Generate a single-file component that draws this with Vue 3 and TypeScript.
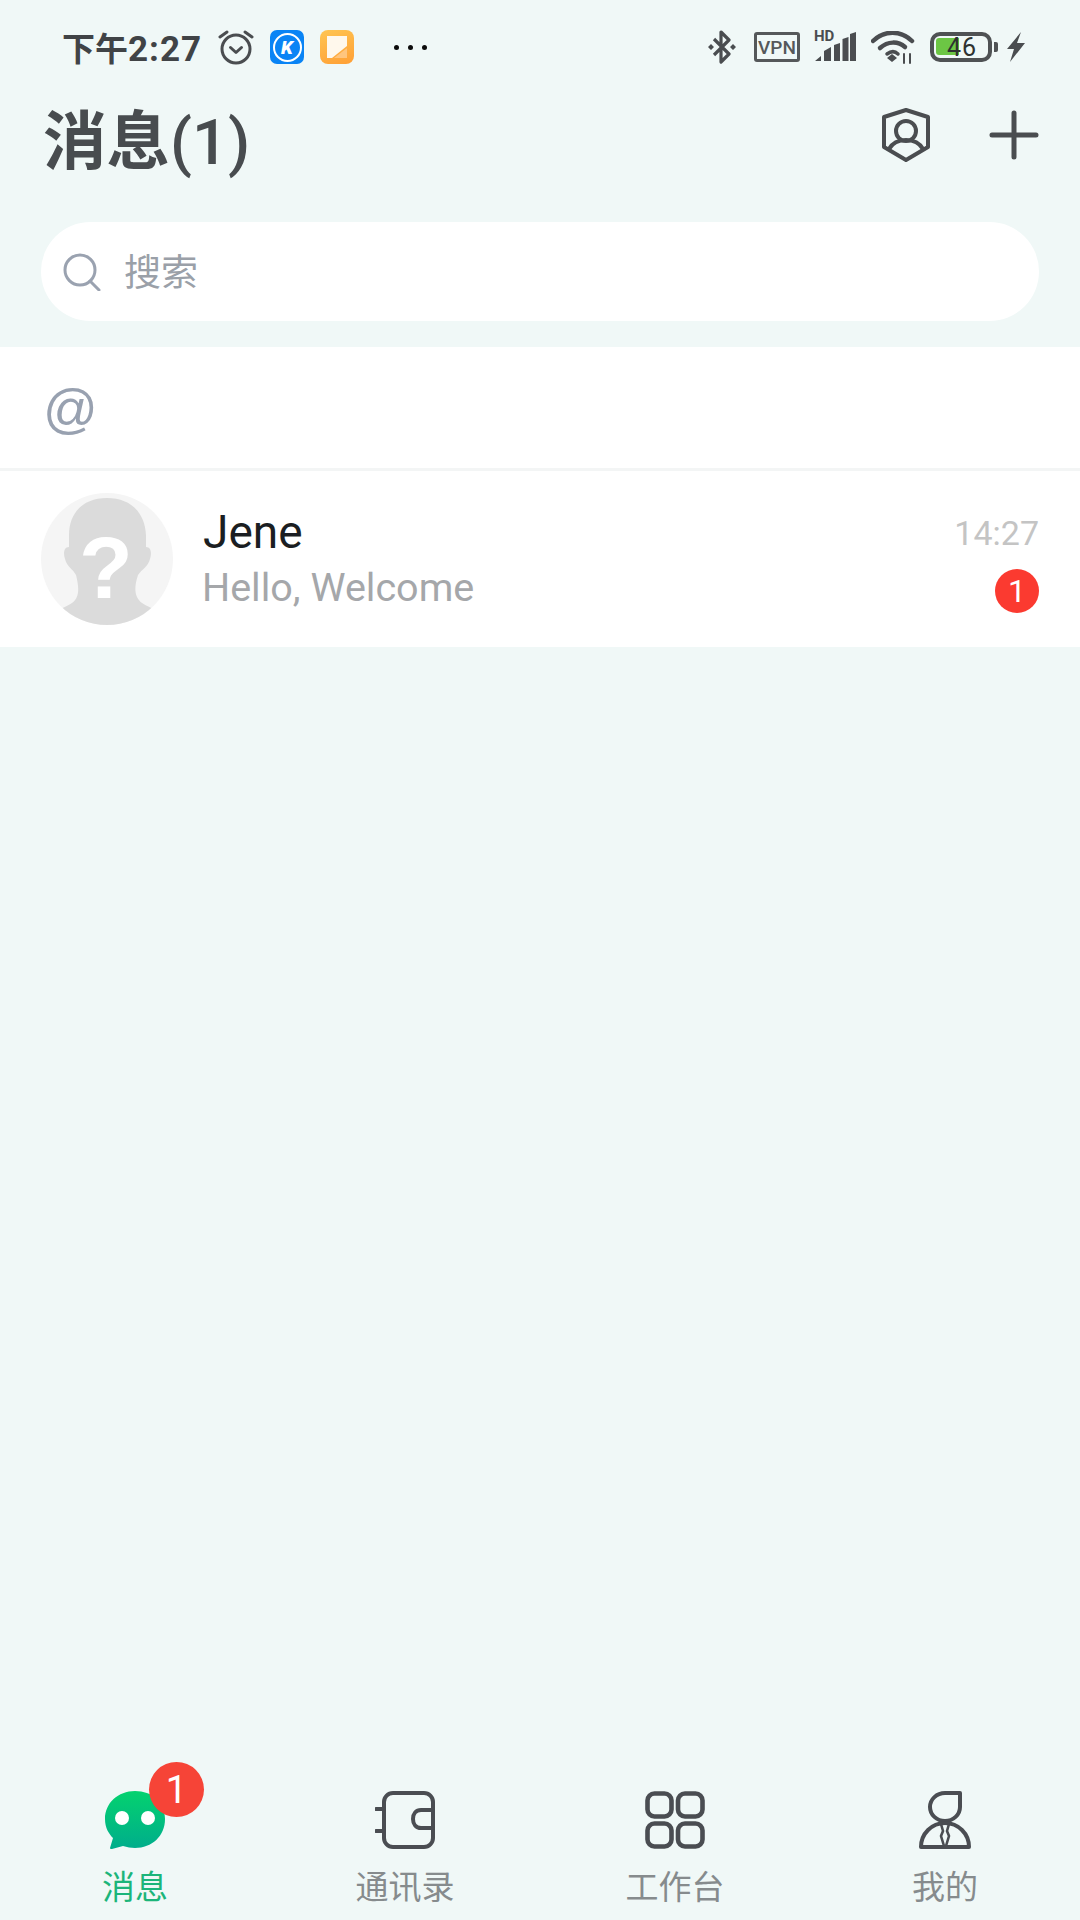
<script setup lang="ts">
type TabIcon = 'chat' | 'book' | 'grid' | 'me'

const tabs: { label: string; icon: TabIcon; active?: boolean }[] = [
  { label: '消息', icon: 'chat', active: true },
  { label: '通讯录', icon: 'book' },
  { label: '工作台', icon: 'grid' },
  { label: '我的', icon: 'me' },
]
</script>

<template>
  <div class="page">
    <div class="status">
      <div class="status-left">
        <span class="clock"><span class="clock-cjk">下午</span>2:27</span>
        <svg class="alarm" width="36" height="36" viewBox="0 0 36 36" fill="none" stroke="#4a4d50" stroke-width="3" stroke-linecap="round" stroke-linejoin="round">
          <circle cx="18" cy="20" r="14" />
          <path d="M12.5 18.5l5.5 5 5.500-5" />
          <path d="M2 8l7-5M34 8l-7-5" />
        </svg>
        <div class="app-k"><span class="app-k-ring">K</span></div>
        <div class="app-note">
          <svg width="22" height="24" viewBox="0 0 22 24">
            <path d="M1 1h20v10L6 23H1z" fill="#fff8ec" />
            <path d="M21 1v12L8 23h13z" fill="#ffc57e" />
          </svg>
        </div>
        <div class="more"><i /><i /><i /></div>
      </div>

      <div class="status-right">
        <svg class="bt" width="30" height="34" viewBox="0 0 30 34" fill="none" stroke="#4a4d50" stroke-width="3.2" stroke-linejoin="round">
          <path d="M7 9l15 15-8 8V2l8 8L7 25" />
          <path d="M1 17l3-3 3 3-3 3zM23 17l3-3 3 3-3 3z" fill="#4a4d50" stroke="none" />
        </svg>
        <span class="vpn">VPN</span>
        <div class="signal">
          <span class="hd">HD</span>
          <svg width="42" height="30" viewBox="0 0 42 30" fill="#4a4d50">
            <path d="M1 29l6-5v5zM10 29V19l7-4v14zM20 29V13l6-2v18zM28.500 29V7l6-2v24zM36 29V2l6-2v29z" />
          </svg>
        </div>
        <svg class="wifi" width="44" height="33" viewBox="0 0 44 33" fill="none" stroke="#4a4d50" stroke-width="4.500" stroke-linecap="round">
          <path d="M2 10C13 -1 30 -1 41 10" />
          <path d="M9 17C17 10 27 10 34 16" />
          <path d="M16 23c4-3 8-3 11 0" stroke-width="3.5" />
          <path d="M16 27l5-4 5 4-5 4z" fill="#4a4d50" stroke="none" />
          <path d="M33 23v9M39 23v9" stroke-width="2" />
        </svg>
        <div class="battery">
          <div class="battery-body">
            <div class="battery-fill" />
            <span class="battery-text">46</span>
          </div>
          <div class="battery-nub" />
        </div>
        <svg class="bolt" width="20" height="30" viewBox="0 0 20 30" fill="#4a4d50">
          <path d="M15 0L1 17h7L4 30l15-19h-8z" />
        </svg>
      </div>
    </div>

    <header class="top">
      <h1 class="title"><span class="title-cjk">消息</span>(1)</h1>
      <div class="top-actions">
        <svg width="48" height="54" viewBox="0 0 48 54" fill="none" stroke="#4a4d50" stroke-width="4" stroke-linejoin="round">
          <path d="M2 9L24 2l22 7v30L24 52 2 39z" />
          <circle cx="24" cy="23" r="10" />
          <path d="M7 41c4-7 10-9 17-9s13 2 17 9" />
        </svg>
        <svg width="50" height="50" viewBox="0 0 50 50" fill="none" stroke="#4a4d50" stroke-width="5" stroke-linecap="round">
          <path d="M25 3v44M3 25h44" />
        </svg>
      </div>
    </header>

    <div class="search-wrap">
      <div class="search">
        <svg width="38" height="38" viewBox="0 0 38 38" fill="none" stroke="#9aa2b0" stroke-width="3">
          <circle cx="17" cy="17" r="15" />
          <path d="M27 28l9 9" stroke-linecap="round" />
        </svg>
        <span class="search-text">搜索</span>
      </div>
    </div>

    <div class="mention"><span class="at">@</span></div>

    <div class="chat-row">
      <svg class="avatar" width="132" height="132" viewBox="0 0 132 132">
        <defs>
          <clipPath id="avatar-clip"><circle cx="66" cy="66" r="66" /></clipPath>
        </defs>
        <circle cx="66" cy="66" r="66" fill="#f5f5f5" />
        <path
          clip-path="url(#avatar-clip)"
          fill="#dbdbdb"
          d="M66 5C42 5 28 20 28 42v12c-5 0-6 6-4 12 2 8 8 10 11 16 3 12 4 22-4 28-4 3-10 5-16 8v22h104v-22c-6-2-14-5-18-8-8-6-8-16-4-28 4-6 10-8 12-16 2-6 1-12-4-12V42C104 20 90 5 66 5z"
        />
        <text x="65" y="105" text-anchor="middle" class="avatar-q">?</text>
      </svg>
      <div class="chat-main">
        <div class="chat-name">Jene</div>
        <div class="chat-msg">Hello, Welcome</div>
      </div>
      <div class="chat-side">
        <div class="chat-time">14:27</div>
        <div class="chat-badge">1</div>
      </div>
    </div>

    <div class="spacer" />

    <nav class="tabs">
      <div v-for="tab in tabs" :key="tab.label" class="tab" :class="{ active: tab.active }">
        <div class="tab-icon">
          <template v-if="tab.icon === 'chat'">
            <svg width="62" height="60" viewBox="0 0 62 60">
              <defs>
                <linearGradient id="chat-grad" x1="0" y1="0" x2="0" y2="1">
                  <stop offset="0" stop-color="#04d26f" />
                  <stop offset="1" stop-color="#00ad8c" />
                </linearGradient>
              </defs>
              <path fill="url(#chat-grad)" d="M31 1C14 1 1 13 1 29c0 9 4 15 8 19l-3 10c0 1 1 1 2 1l11-3c4 1 8 2 12 2 17 0 30-12 30-29S48 1 31 1z" />
              <circle cx="18" cy="28" r="7" fill="#fff" />
              <circle cx="44" cy="28" r="7" fill="#fff" />
            </svg>
            <span class="tab-badge">1</span>
          </template>
          <svg v-else-if="tab.icon === 'book'" width="60" height="58" viewBox="0 0 60 58" fill="none" stroke="#4a4d52" stroke-width="4" stroke-linecap="round">
            <rect x="9" y="2" width="49" height="54" rx="9" />
            <path d="M1 18h8M1 40h8" />
            <path d="M58 19H46c-5 0-8 4-8 9s3 9 8 9h12" />
          </svg>
          <svg v-else-if="tab.icon === 'grid'" width="60" height="58" viewBox="0 0 60 58" fill="none" stroke="#4a4d52" stroke-width="4.600">
            <rect x="2.500" y="2.500" width="24" height="23" rx="7" />
            <rect x="33" y="2.500" width="24.500" height="23" rx="7" />
            <rect x="2.500" y="32.500" width="24" height="23" rx="7" />
            <rect x="33" y="32.500" width="24.500" height="23" rx="7" />
          </svg>
          <svg v-else width="54" height="58" viewBox="0 0 54 58" fill="none" stroke="#4a4d52" stroke-width="4" stroke-linejoin="round">
            <path d="M42 2H27a15 14 0 1 0 15 14z" />
            <path d="M3 56a24 24 0 0 1 48 0z" />
            <path d="M23 33l2 7-2 5 3 10M31 33l-2 7 2 5-3 10" stroke-width="2.6" />
          </svg>
        </div>
        <span class="tab-label">{{ tab.label }}</span>
      </div>
    </nav>
  </div>
</template>

<style scoped>
.page {
  display: flex;
  flex-direction: column;
  width: 1080px;
  height: 1920px;
  overflow: hidden;
  background: #f0f8f7;
  font-family: Roboto, "Noto Sans CJK SC", sans-serif;
}

.status {
  display: flex;
  justify-content: space-between;
  align-items: center;
  height: 94px;
  padding: 0 54px 0 62px;
  box-sizing: border-box;
}

.status-left,
.status-right {
  display: flex;
  align-items: center;
}

.clock {
  width: 138px;
  color: #404346;
  font-size: 35px;
  font-weight: 700;
  letter-spacing: 1px;
  white-space: nowrap;
}

.clock-cjk {
  font-size: 33px;
  letter-spacing: 0;
}

.alarm {
  margin-left: 18px;
}

.app-k {
  display: flex;
  justify-content: center;
  align-items: center;
  width: 34px;
  height: 34px;
  margin-left: 16px;
  border-radius: 7px;
  background: #0a84f5;
}

.app-k-ring {
  display: flex;
  justify-content: center;
  align-items: center;
  width: 25px;
  height: 25px;
  border: 2px solid #fff;
  border-radius: 50%;
  color: #fff;
  font-size: 19px;
  font-style: italic;
  font-weight: 900;
}

.app-note {
  display: flex;
  justify-content: center;
  align-items: center;
  width: 34px;
  height: 34px;
  margin-left: 16px;
  border-radius: 8px;
  background: linear-gradient(160deg, #ffc552, #ff9f35);
}

.more {
  display: flex;
  gap: 9px;
  margin-left: 40px;
}

.more i {
  width: 5px;
  height: 5px;
  border-radius: 50%;
  background: #0c0c0c;
}

.vpn {
  display: flex;
  justify-content: center;
  align-items: center;
  width: 46px;
  height: 30px;
  margin-left: 17px;
  box-sizing: border-box;
  border: 3px solid #55585a;
  border-radius: 3px;
  color: #55585a;
  font-size: 19px;
  font-weight: 500;
}

.signal {
  position: relative;
  width: 42px;
  height: 30px;
  margin-left: 14px;
}

.hd {
  position: absolute;
  top: -3px;
  left: 0;
  color: #4a4d50;
  font-size: 15px;
  font-weight: 700;
  line-height: 14px;
}

.wifi {
  margin-left: 15px;
}

.battery {
  display: flex;
  align-items: center;
  margin-left: 15px;
}

.battery-body {
  position: relative;
  width: 62px;
  height: 30px;
  box-sizing: border-box;
  border: 4px solid #4f5254;
  border-radius: 10px;
}

.battery-fill {
  position: absolute;
  top: 2px;
  bottom: 3px;
  left: 2px;
  width: 23px;
  border-radius: 3px 0 0 3px;
  background: #6cc644;
}

.battery-text {
  position: absolute;
  top: 0;
  left: 13px;
  color: #2e3230;
  font-size: 25px;
  line-height: 24px;
  letter-spacing: 1px;
}

.battery-nub {
  width: 4px;
  height: 10px;
  margin-left: 2px;
  border-radius: 0 2px 2px 0;
  background: #4f5254;
}

.bolt {
  margin-left: 8px;
}

.top {
  display: flex;
  justify-content: space-between;
  align-items: flex-start;
  height: 128px;
  padding: 0 41px 0 43px;
  box-sizing: border-box;
}

.title {
  margin: 0;
  color: #484c4f;
  font-size: 63.5px;
  font-weight: 500;
  line-height: 98px;
}

.title-cjk {
  font-weight: 700;
}

.top-actions {
  display: flex;
  align-items: center;
  gap: 59px;
  margin-top: 14px;
}

.search-wrap {
  padding: 0 41px 26px;
}

.search {
  display: flex;
  align-items: center;
  gap: 23px;
  height: 99px;
  padding-left: 22px;
  border-radius: 50px;
  background: #fff;
}

.search-text {
  margin-top: -4px;
  color: #9aa0a8;
  font-size: 37px;
}

.mention {
  display: flex;
  align-items: center;
  height: 121px;
  padding-left: 43px;
  border-bottom: 3px solid #f3f5f5;
  background: #fff;
}

.at {
  color: #98a1b0;
  font-family: "Liberation Sans", sans-serif;
  font-size: 54px;
}

.chat-row {
  display: flex;
  align-items: flex-start;
  height: 176px;
  padding: 22px 41px 0;
  box-sizing: border-box;
  background: #fff;
}

.avatar {
  flex: none;
}

.avatar-q {
  fill: #fff;
  font-family: "Liberation Sans", sans-serif;
  font-size: 88px;
  font-weight: 700;
}

.chat-main {
  flex: 1;
  margin-left: 30px;
}

.chat-name {
  margin-top: 12px;
  color: #1b1e22;
  font-size: 46px;
  line-height: 54px;
}

.chat-msg {
  margin-top: 3px;
  margin-left: -1px;
  color: #a5a7aa;
  font-size: 39.5px;
  line-height: 52px;
}

.chat-side {
  display: flex;
  flex-direction: column;
  align-items: flex-end;
  margin-top: 20px;
}

.chat-time {
  color: #c4c4c4;
  font-size: 34px;
  line-height: 40px;
}

.chat-badge {
  display: flex;
  justify-content: center;
  align-items: center;
  width: 44px;
  height: 44px;
  margin-top: 16px;
  border-radius: 50%;
  background: #fb3a30;
  color: #fff;
  font-size: 32px;
}

.spacer {
  flex: 1;
}

.tabs {
  display: grid;
  grid-template-columns: repeat(4, 1fr);
  height: 130px;
  padding-bottom: 14px;
  box-sizing: border-box;
}

.tab {
  display: flex;
  flex-direction: column;
  align-items: center;
}

.tab-icon {
  position: relative;
  display: flex;
  justify-content: center;
  align-items: center;
  height: 60px;
}

.tab-badge {
  position: absolute;
  top: -28px;
  left: 45px;
  display: flex;
  justify-content: center;
  align-items: center;
  width: 55px;
  height: 55px;
  border-radius: 50%;
  background: #f64437;
  color: #fff;
  font-size: 38px;
}

.tab-label {
  margin-top: 20px;
  color: #868b8d;
  font-size: 33px;
  line-height: 36px;
}

.tab.active .tab-label {
  color: #1cb57a;
}
</style>
